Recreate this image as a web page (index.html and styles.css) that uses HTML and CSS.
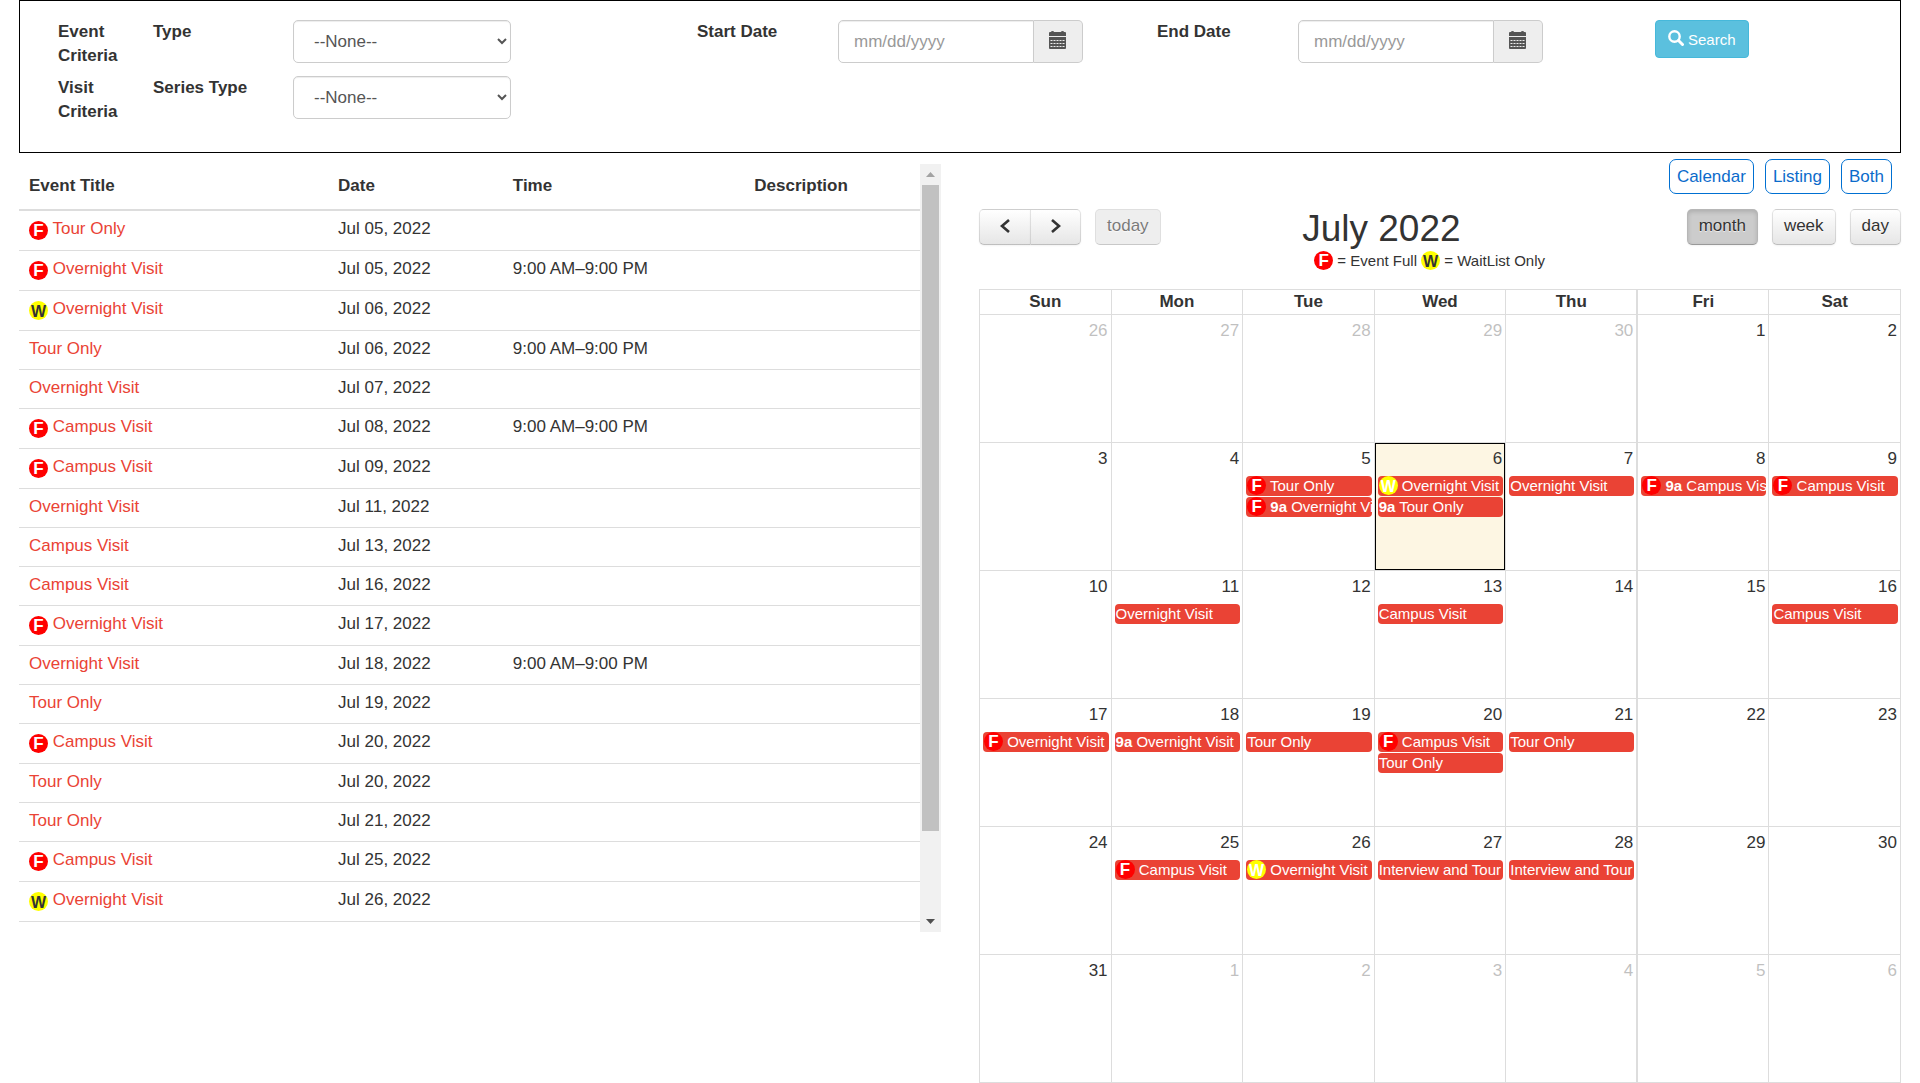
FILE: index.html
```html
<!DOCTYPE html>
<html lang="en">
<head>
    <meta charset="UTF-8">
    <meta name="viewport" content="width=device-width, initial-scale=1.0">
    <title>Events Calendar</title>
    <link rel="stylesheet" href="styles.css">
</head>
<body>
    <svg class="sprite" aria-hidden="true">
        <symbol id="icon-calendar" viewBox="0 0 17 18">
            <path d="M0 5V2q0-1 1-1h1q0-1 1.500-1T5 1h7q0-1 1.500-1T15 1h1q1 0 1 1v3z" />
            <path d="M0 6h17v11q0 1-1 1H1q-1 0-1-1z" />
            <path d="M1.500 9.500h14M1.500 12.500h14M1.500 15.500h14" stroke="#eee" stroke-dasharray="2 1" />
        </symbol>
        <symbol id="icon-search" viewBox="0 0 16 16">
            <circle cx="6.5" cy="6.5" r="5.2" fill="none" stroke="currentColor" stroke-width="2.4" />
            <path d="M10.5 10.5l4 4" fill="none" stroke="currentColor" stroke-width="3" stroke-linecap="round" />
        </symbol>
    </svg>

    <form class="criteria">
        <div class="criteria-label">Event<br>Criteria</div>
        <label for="type">Type</label>
        <div><select id="type" class="form-control"><option>--None--</option></select></div>
        <label for="start-date">Start Date</label>
        <div class="input-group">
            <input type="text" id="start-date" class="form-control" placeholder="mm/dd/yyyy">
            <button type="button" class="addon" aria-label="Pick start date"><svg><use href="#icon-calendar" /></svg></button>
        </div>
        <label for="end-date">End Date</label>
        <div class="input-group">
            <input type="text" id="end-date" class="form-control" placeholder="mm/dd/yyyy">
            <button type="button" class="addon" aria-label="Pick end date"><svg><use href="#icon-calendar" /></svg></button>
        </div>
        <div><button type="button" class="search-btn"><svg><use href="#icon-search" /></svg>Search</button></div>

        <div class="criteria-label">Visit<br>Criteria</div>
        <label for="series-type">Series Type</label>
        <div><select id="series-type" class="form-control"><option>--None--</option></select></div>
    </form>

    <div class="content">
        <div class="listing">
            <div class="listing-body">
                <table class="event-table">
                    <thead>
                        <tr><th>Event Title</th><th>Date</th><th>Time</th><th>Description</th></tr>
                    </thead>
                    <tbody>
                        <tr><td><span class="badge full">F</span> <a href="#">Tour Only</a></td><td>Jul 05, 2022</td><td></td><td></td></tr>
                        <tr><td><span class="badge full">F</span> <a href="#">Overnight Visit</a></td><td>Jul 05, 2022</td><td>9:00 AM–9:00 PM</td><td></td></tr>
                        <tr><td><span class="badge wait">W</span> <a href="#">Overnight Visit</a></td><td>Jul 06, 2022</td><td></td><td></td></tr>
                        <tr><td><a href="#">Tour Only</a></td><td>Jul 06, 2022</td><td>9:00 AM–9:00 PM</td><td></td></tr>
                        <tr><td><a href="#">Overnight Visit</a></td><td>Jul 07, 2022</td><td></td><td></td></tr>
                        <tr><td><span class="badge full">F</span> <a href="#">Campus Visit</a></td><td>Jul 08, 2022</td><td>9:00 AM–9:00 PM</td><td></td></tr>
                        <tr><td><span class="badge full">F</span> <a href="#">Campus Visit</a></td><td>Jul 09, 2022</td><td></td><td></td></tr>
                        <tr><td><a href="#">Overnight Visit</a></td><td>Jul 11, 2022</td><td></td><td></td></tr>
                        <tr><td><a href="#">Campus Visit</a></td><td>Jul 13, 2022</td><td></td><td></td></tr>
                        <tr><td><a href="#">Campus Visit</a></td><td>Jul 16, 2022</td><td></td><td></td></tr>
                        <tr><td><span class="badge full">F</span> <a href="#">Overnight Visit</a></td><td>Jul 17, 2022</td><td></td><td></td></tr>
                        <tr><td><a href="#">Overnight Visit</a></td><td>Jul 18, 2022</td><td>9:00 AM–9:00 PM</td><td></td></tr>
                        <tr><td><a href="#">Tour Only</a></td><td>Jul 19, 2022</td><td></td><td></td></tr>
                        <tr><td><span class="badge full">F</span> <a href="#">Campus Visit</a></td><td>Jul 20, 2022</td><td></td><td></td></tr>
                        <tr><td><a href="#">Tour Only</a></td><td>Jul 20, 2022</td><td></td><td></td></tr>
                        <tr><td><a href="#">Tour Only</a></td><td>Jul 21, 2022</td><td></td><td></td></tr>
                        <tr><td><span class="badge full">F</span> <a href="#">Campus Visit</a></td><td>Jul 25, 2022</td><td></td><td></td></tr>
                        <tr><td><span class="badge wait">W</span> <a href="#">Overnight Visit</a></td><td>Jul 26, 2022</td><td></td><td></td></tr>
                    </tbody>
                </table>
            </div>
            <div class="scrollbar" aria-hidden="true">
                <svg class="scroll-up" viewBox="0 0 9 5"><path d="M0 5h9L4.500 0z" /></svg>
                <div class="scroll-track"><div class="scroll-thumb"></div></div>
                <svg class="scroll-down" viewBox="0 0 9 5"><path d="M0 0h9L4.500 5z" /></svg>
            </div>
        </div>

        <div class="calendar">
            <div class="view-switch">
                <button type="button">Calendar</button>
                <button type="button">Listing</button>
                <button type="button">Both</button>
            </div>

            <div class="toolbar">
                <div class="toolbar-group">
                    <div class="btn-pair">
                        <button type="button" class="fc-btn" aria-label="Previous month"><svg viewBox="0 0 12 16"><path d="M10 2L3 8l7 6" /></svg></button>
                        <button type="button" class="fc-btn" aria-label="Next month"><svg viewBox="0 0 12 16"><path d="M2 2l7 6-7 6" /></svg></button>
                    </div>
                    <button type="button" class="fc-btn" disabled>today</button>
                </div>
                <div class="toolbar-title">
                    <h2>July 2022</h2>
                    <p class="legend"><span class="badge full">F</span> = Event Full <span class="badge wait">W</span> = WaitList Only</p>
                </div>
                <div class="toolbar-group">
                    <button type="button" class="fc-btn active">month</button>
                    <button type="button" class="fc-btn">week</button>
                    <button type="button" class="fc-btn">day</button>
                </div>
            </div>

            <table class="month">
                <thead>
                    <tr><th>Sun</th><th>Mon</th><th>Tue</th><th>Wed</th><th>Thu</th><th>Fri</th><th>Sat</th></tr>
                </thead>
                <tbody>
                    <tr>
                        <td class="other"><span class="day">26</span></td>
                        <td class="other"><span class="day">27</span></td>
                        <td class="other"><span class="day">28</span></td>
                        <td class="other"><span class="day">29</span></td>
                        <td class="other"><span class="day">30</span></td>
                        <td><span class="day">1</span></td>
                        <td><span class="day">2</span></td>
                    </tr>
                    <tr>
                        <td><span class="day">3</span></td>
                        <td><span class="day">4</span></td>
                        <td>
                            <span class="day">5</span>
                            <a href="#" class="event"><span class="badge full">F</span> Tour Only</a>
                            <a href="#" class="event"><span class="badge full">F</span> <b>9a</b> Overnight Visit</a>
                        </td>
                        <td class="today">
                            <span class="day">6</span>
                            <a href="#" class="event"><span class="badge wait">W</span> Overnight Visit</a>
                            <a href="#" class="event"><b>9a</b> Tour Only</a>
                        </td>
                        <td><span class="day">7</span><a href="#" class="event">Overnight Visit</a></td>
                        <td><span class="day">8</span><a href="#" class="event"><span class="badge full">F</span> <b>9a</b> Campus Visit</a></td>
                        <td><span class="day">9</span><a href="#" class="event"><span class="badge full">F</span> Campus Visit</a></td>
                    </tr>
                    <tr>
                        <td><span class="day">10</span></td>
                        <td><span class="day">11</span><a href="#" class="event">Overnight Visit</a></td>
                        <td><span class="day">12</span></td>
                        <td><span class="day">13</span><a href="#" class="event">Campus Visit</a></td>
                        <td><span class="day">14</span></td>
                        <td><span class="day">15</span></td>
                        <td><span class="day">16</span><a href="#" class="event">Campus Visit</a></td>
                    </tr>
                    <tr>
                        <td><span class="day">17</span><a href="#" class="event"><span class="badge full">F</span> Overnight Visit</a></td>
                        <td><span class="day">18</span><a href="#" class="event"><b>9a</b> Overnight Visit</a></td>
                        <td><span class="day">19</span><a href="#" class="event">Tour Only</a></td>
                        <td>
                            <span class="day">20</span>
                            <a href="#" class="event"><span class="badge full">F</span> Campus Visit</a>
                            <a href="#" class="event">Tour Only</a>
                        </td>
                        <td><span class="day">21</span><a href="#" class="event">Tour Only</a></td>
                        <td><span class="day">22</span></td>
                        <td><span class="day">23</span></td>
                    </tr>
                    <tr>
                        <td><span class="day">24</span></td>
                        <td><span class="day">25</span><a href="#" class="event"><span class="badge full">F</span> Campus Visit</a></td>
                        <td><span class="day">26</span><a href="#" class="event"><span class="badge wait">W</span> Overnight Visit</a></td>
                        <td><span class="day">27</span><a href="#" class="event">Interview and Tour</a></td>
                        <td><span class="day">28</span><a href="#" class="event">Interview and Tour</a></td>
                        <td><span class="day">29</span></td>
                        <td><span class="day">30</span></td>
                    </tr>
                    <tr>
                        <td><span class="day">31</span></td>
                        <td class="other"><span class="day">1</span></td>
                        <td class="other"><span class="day">2</span></td>
                        <td class="other"><span class="day">3</span></td>
                        <td class="other"><span class="day">4</span></td>
                        <td class="other"><span class="day">5</span></td>
                        <td class="other"><span class="day">6</span></td>
                    </tr>
                </tbody>
            </table>
        </div>
    </div>
</body>
</html>
```
FILE: styles.css
```css
:root {
    --event: #ea4335;
    --line: #ddd;
    --text: #333;
}

* {
    box-sizing: border-box;
}
body {
    margin: 0;
    padding: 0 19px;
    font-family: "Liberation Sans", Arial, sans-serif;
    font-size: 17px;
    line-height: 24px;
    color: var(--text);
    background-color: #fff;
}
button, input, select {
    font-family: inherit;
    font-size: 17px;
}
button {
    cursor: pointer;
}
.sprite {
    display: none;
}

/* search criteria */
.criteria {
    display: grid;
    grid-template-columns: 95fr 140fr 404fr 141fr 319fr 141fr 357fr 245fr;
    row-gap: 8px;
    padding: 19px 0 28px 38px;
    border: 1px solid #000;
}
.criteria label,
.criteria-label {
    font-weight: bold;
}
.form-control {
    height: 43px;
    padding: 7px 15px;
    border: 1px solid #ccc;
    border-radius: 5px;
    background-color: #fff;
    color: #555;
    box-shadow: inset 0 1px 1px rgba(0, 0, 0, 0.075);
}
.form-control::placeholder {
    color: #999;
}
select.form-control {
    width: 54%;
    padding-left: 16px;
}
.input-group {
    display: flex;
    width: 245px;
}
.input-group .form-control {
    flex: 1;
    min-width: 0;
    border-radius: 5px 0 0 5px;
}
.addon {
    display: flex;
    align-items: center;
    justify-content: center;
    width: 49px;
    height: 43px;
    padding: 0 2px 4px 0;
    border: 1px solid #ccc;
    border-left: 0;
    border-radius: 0 5px 5px 0;
    background-color: #eee;
}
.addon svg {
    width: 17px;
    height: 18px;
    fill: #555;
}
.search-btn {
    display: flex;
    align-items: center;
    gap: 4px;
    height: 38px;
    padding: 0 12px;
    border: 1px solid #46b8da;
    border-radius: 4px;
    background-color: #5bc0de;
    color: #fff;
    font-size: 15px;
}
.search-btn svg {
    width: 16px;
    height: 16px;
    margin-bottom: 3px;
}

.content {
    display: grid;
    grid-template-columns: minmax(0, 1fr) minmax(0, 1fr);
    align-items: start;
    gap: 38px;
}

/* event list */
.listing {
    display: flex;
    margin-top: 11px;
}
.listing-body {
    flex: 1;
    padding-bottom: 10px;
}
.scrollbar {
    display: flex;
    flex-direction: column;
    align-items: center;
    width: 21px;
    background-color: #f1f1f1;
}
.scrollbar svg {
    width: 9px;
    height: 5px;
    margin: 8px 0;
}
.scroll-up {
    fill: #a3a3a3;
}
.scroll-down {
    fill: #505050;
}
.scroll-track {
    flex: 1;
    align-self: stretch;
    padding: 0 2px;
}
.scroll-thumb {
    height: 89%;
    background-color: #c1c1c1;
}
.event-table {
    width: 100%;
    border-spacing: 0;
    table-layout: fixed;
}
.event-table th {
    padding: 10px 10px 11px;
    border-bottom: 2px solid var(--line);
    text-align: left;
}
.event-table th:nth-child(1) { width: 34.3%; }
.event-table th:nth-child(2) { width: 19.4%; }
.event-table th:nth-child(3) { width: 26.8%; }
.event-table td {
    padding: 6px 10px 8px;
    border-bottom: 1px solid var(--line);
    vertical-align: top;
}
.event-table a {
    color: var(--event);
    text-decoration: none;
}

.badge {
    display: inline-block;
    width: 19px;
    height: 19px;
    border-radius: 50%;
    font-size: 17px;
    font-weight: bold;
    line-height: 20px;
    text-align: center;
    vertical-align: top;
}
.badge.full {
    background-color: #f00;
    color: #fff;
}
.badge.wait {
    background-color: #ff0;
    font-size: 16px;
    line-height: 21px;
}
.event-table .badge {
    margin: 4px 0 2px;
}

/* calendar */
.view-switch {
    display: flex;
    justify-content: flex-end;
    gap: 11px;
    padding: 6px 9px 0 0;
}
.view-switch button {
    height: 35px;
    padding: 0 7px;
    border: 1px solid #0070d2;
    border-radius: 7px;
    background-color: #fff;
    color: #0b6bcb;
}
.toolbar {
    display: flex;
    justify-content: space-between;
    align-items: flex-start;
    padding: 15px 0 16px;
}
.toolbar-group {
    display: flex;
    gap: 14px;
}
.btn-pair {
    display: flex;
}
.fc-btn {
    display: flex;
    align-items: center;
    justify-content: center;
    height: 36px;
    padding: 0 11px 2px;
    border: 1px solid;
    border-color: rgba(0, 0, 0, 0.1) rgba(0, 0, 0, 0.1) rgba(0, 0, 0, 0.25);
    border-radius: 5px;
    background: #f5f5f5 linear-gradient(#fff, #e6e6e6);
    color: var(--text);
    text-shadow: 0 1px 1px rgba(255, 255, 255, 0.75);
    box-shadow: inset 0 1px 0 rgba(255, 255, 255, 0.2), 0 1px 2px rgba(0, 0, 0, 0.05);
}
.fc-btn.active {
    background: #ccc;
    box-shadow: inset 0 2px 4px rgba(0, 0, 0, 0.15), 0 1px 2px rgba(0, 0, 0, 0.05);
}
.fc-btn:disabled {
    background: #e6e6e6;
    color: var(--text);
    opacity: 0.65;
    box-shadow: none;
}
.btn-pair .fc-btn {
    width: 51px;
}
.btn-pair .fc-btn:first-child {
    border-right: 0;
    border-radius: 5px 0 0 5px;
}
.btn-pair .fc-btn:last-child {
    border-radius: 0 5px 5px 0;
}
.fc-btn svg {
    width: 12px;
    height: 16px;
    fill: none;
    stroke: var(--text);
    stroke-width: 2.6;
}
.toolbar-title h2 {
    margin: 0;
    font-size: 37px;
    font-weight: normal;
    line-height: 40px;
}
.legend {
    margin: 0;
    padding-left: 12px;
    font-size: 15px;
    line-height: 24px;
}
.legend .badge {
    margin-top: 2px;
}

.month {
    width: 100%;
    border-collapse: collapse;
    table-layout: fixed;
}
.month th,
.month td {
    border: 1px solid var(--line);
    padding: 0;
}
.month th {
    height: 25px;
}
.month td {
    height: 128px;
    padding: 4px 2px 0 3px;
    vertical-align: top;
}
/* heavier rule between Thu and Fri */
.month th:nth-child(6),
.month td:nth-child(6) {
    border-left-width: 2px;
}
.month .today {
    background-color: #fdf6e3;
    box-shadow: inset 0 0 0 1px #000;
}
.day {
    display: block;
    margin-bottom: 5px;
    padding-right: 1px;
    text-align: right;
}
.other .day {
    opacity: 0.3;
}
.event {
    display: block;
    height: 20px;
    margin-bottom: 1px;
    padding: 0 1px;
    overflow: hidden;
    border-radius: 4px;
    background-color: var(--event);
    color: #fff;
    font-size: 15px;
    line-height: 19px;
    text-decoration: none;
    white-space: nowrap;
}
```
